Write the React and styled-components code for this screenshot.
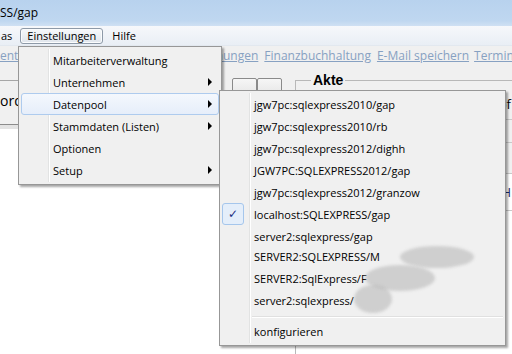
import React from "react";
import styled, { createGlobalStyle } from "styled-components";

const GlobalStyle = createGlobalStyle`
  html, body {
    margin: 0;
    padding: 0;
    background: #fff;
  }
  body {
    font-family: "Open Sans", "Noto Sans", sans-serif;
    font-size: 11px;
    color: #000;
  }
`;

const Window = styled.div`
  position: relative;
  width: 512px;
  height: 354px;
  overflow: hidden;
  display: flex;
  flex-direction: column;
  background: #f0f0f0;
`;

const TitleBar = styled.div`
  height: 26px;
  flex: none;
  display: flex;
  align-items: center;
  padding-bottom: 1px;
  box-sizing: border-box;
  background: linear-gradient(#b8d2ee, #bfd7f0 80%, #cfe0f3);
  font-size: 12px;
`;

const MenuBar = styled.div`
  height: 20px;
  flex: none;
  display: flex;
  align-items: center;
  background: linear-gradient(#f6f8fb, #e9eef5);
  border-bottom: 1px solid #e2e8ef;
  box-sizing: border-box;
`;

const MenuTitle = styled.div`
  height: 16px;
  display: flex;
  align-items: center;
  padding: 0 6px;
  margin-left: ${({ $gap }) => $gap || 0}px;
  box-sizing: border-box;
  border: 1px solid ${({ $open }) => ($open ? "#8e9aa8" : "transparent")};
  border-radius: 3px;
  background: ${({ $open }) =>
    $open ? "linear-gradient(#f7f9fb, #dfe5ec)" : "transparent"};
  box-shadow: ${({ $open }) => ($open ? "inset 0 0 0 1px #fbfcfd" : "none")};
`;

const LinkBar = styled.div`
  height: 19px;
  flex: none;
  display: flex;
  align-items: center;
  white-space: nowrap;
  font-size: 12px;
`;

const Link = styled.span`
  color: #87a1c2;
  text-decoration: underline;
  margin-left: ${({ $gap }) => $gap || 0}px;
`;

const Workspace = styled.div`
  flex: 1;
  display: grid;
  grid-template-columns: 222px 73px 1fr;
`;

const LeftPane = styled.div`
  display: flex;
  flex-direction: column;
  padding-top: 15px;
`;

const SearchBox = styled.div`
  height: 39px;
  border-top: 1px solid #a6a6a6;
  border-bottom: 1px solid #8c8c8c;
  display: flex;
  align-items: center;
  font-size: 14px;
  padding-bottom: 4px;
  box-sizing: content-box;
`;

const Splitter = styled.div`
  height: 4px;
  background: #e3e3e3;
`;

const WhiteArea = styled.div`
  flex: 1;
  background: #fff;
`;

const MidPane = styled.div`
  display: flex;
  align-items: flex-start;
  padding: 13px 0 0 10px;
  background: linear-gradient(#f0f0f0 60px, #fff 60px);
`;

const SmallButton = styled.div`
  width: 25px;
  height: 28px;
  box-sizing: border-box;
  border: 1px solid #8a8a8a;
  border-radius: 2px;
  background: linear-gradient(#f6f6f6, #dcdcdc);
`;

const GroupPane = styled.div`
  display: flex;
  flex-direction: column;
  padding-top: 15px;
`;

const GroupBox = styled.div`
  flex: 1;
  border-top: 1px solid #b8b8b8;
  border-left: 1px solid #b8b8b8;
  display: flex;
  flex-direction: column;
`;

const Legend = styled.div`
  align-self: flex-start;
  margin: -9px 0 0 15px;
  padding: 0 2px;
  background: #f0f0f0;
  font-family: "Liberation Sans", Arial, sans-serif;
  font-weight: bold;
  font-size: 14px;
  line-height: 16px;
`;

const FieldRow = styled.div`
  height: ${({ $h }) => $h}px;
  flex: none;
  display: flex;
  align-items: center;
  justify-content: flex-end;
  border-bottom: 1px solid #c9c9c9;
  background: ${({ $white }) => ($white ? "#fff" : "#f0f0f0")};
  font-size: 13px;
`;

const FieldText = styled.span`
  margin-right: 1px;
  color: ${({ $blue }) => ($blue ? "#1a2a6a" : "#000")};
`;

const FieldFill = styled.div`
  flex: 1;
  background: #fff;
`;

/* ---- drop-down menus (overlay) ---- */

const Popup = styled.div`
  position: absolute;
  left: ${({ $x }) => $x}px;
  top: ${({ $y }) => $y}px;
  width: ${({ $w }) => $w}px;
  box-sizing: border-box;
  padding: 2px 2px 3px;
  background: #f0f0f0;
  border: 1px solid #979797;
  box-shadow: 2px 2px 2px rgba(0, 0, 0, 0.35);
  font-size: 11px;
  z-index: ${({ $z }) => $z || 1};

  &::before {
    content: "";
    position: absolute;
    top: 2px;
    bottom: 2px;
    left: 29px;
    width: 1px;
    background: #e2e3e3;
    box-shadow: 1px 0 0 #ffffff;
  }
`;

const Item = styled.div`
  position: relative;
  height: 22px;
  display: flex;
  align-items: center;
  box-sizing: border-box;
  border: 1px solid ${({ $hot }) => ($hot ? "#aecbee" : "transparent")};
  border-radius: 3px;
  background: ${({ $hot }) =>
    $hot ? "linear-gradient(#f4f8fd, #e6eefa)" : "transparent"};
  white-space: nowrap;
`;

const CheckSlot = styled.div`
  width: 22px;
  height: 22px;
  margin: -1px 0 0 -1px;
  flex: none;
  display: flex;
  align-items: center;
  justify-content: center;
  box-sizing: border-box;
  border: 1px solid ${({ $on }) => ($on ? "#a5c6ec" : "transparent")};
  border-radius: 3px;
  background: ${({ $on }) => ($on ? "#e4eefa" : "transparent")};
  color: #1b2c80;
  font-family: "DejaVu Sans", sans-serif;
  font-size: 12px;
  font-weight: bold;
`;

const Label = styled.span`
  margin-left: 10px;
  flex: 1;
`;

const Arrow = styled.span`
  width: 0;
  height: 0;
  margin-right: 6px;
  border-left: 4px solid #000;
  border-top: 4px solid transparent;
  border-bottom: 4px solid transparent;
`;

const Separator = styled.div`
  height: 7px;
  display: flex;
  align-items: center;
  margin-left: 30px;

  &::after {
    content: "";
    flex: 1;
    height: 1px;
    background: #e0e0e0;
    box-shadow: 0 1px 0 #ffffff;
  }
`;

const Smudge = styled.span`
  display: inline-block;
  vertical-align: middle;
  width: ${({ $w }) => $w}px;
  height: ${({ $h }) => $h}px;
  margin: ${({ $m }) => $m};
  border-radius: 50%;
  background: rgba(180, 180, 180, 0.55);
  filter: blur(1.5px);
`;

const mainItems = [
  { label: "Mitarbeiterverwaltung" },
  { label: "Unternehmen", sub: true },
  { label: "Datenpool", sub: true, hot: true },
  { label: "Stammdaten (Listen)", sub: true },
  { label: "Optionen" },
  { label: "Setup", sub: true },
];

const pools = [
  { label: "jgw7pc:sqlexpress2010/gap" },
  { label: "jgw7pc:sqlexpress2010/rb" },
  { label: "jgw7pc:sqlexpress2012/dighh" },
  { label: "JGW7PC:SQLEXPRESS2012/gap" },
  { label: "jgw7pc:sqlexpress2012/granzow" },
  { label: "localhost:SQLEXPRESS/gap", checked: true },
  { label: "server2:sqlexpress/gap" },
  { label: "SERVER2:SQLEXPRESS/M", smudge: { w: 74, h: 22, m: "-2px 0 0 20px" } },
  { label: "SERVER2:SqlExpress/F", smudge: { w: 70, h: 26, m: "-4px 0 0 -2px" } },
  { label: "server2:sqlexpress/", smudge: { w: 38, h: 28, m: "-6px 0 0 0" } },
];

export default function App() {
  return (
    <>
      <GlobalStyle />
      <Window>
        <TitleBar>SS/gap</TitleBar>
        <MenuBar>
          <MenuTitle $gap={-6}>as</MenuTitle>
          <MenuTitle $open $gap={1}>Einstellungen</MenuTitle>
          <MenuTitle $gap={2}>Hilfe</MenuTitle>
        </MenuBar>
        <LinkBar>
          <Link>ent</Link>
          <Link $gap={170}>Rechnungen</Link>
          <Link $gap={6}>Finanzbuchhaltung</Link>
          <Link $gap={6}>E-Mail speichern</Link>
          <Link $gap={5}>Termin</Link>
        </LinkBar>
        <Workspace>
          <LeftPane>
            <SearchBox>ord</SearchBox>
            <Splitter />
            <WhiteArea />
          </LeftPane>
          <MidPane>
            <SmallButton />
            <SmallButton />
          </MidPane>
          <GroupPane>
            <GroupBox>
              <Legend>Akte</Legend>
              <FieldRow $h={31}>
                <FieldText>of</FieldText>
              </FieldRow>
              <FieldRow $h={22} />
              <FieldRow $h={30} />
              <FieldRow $h={36} $white>
                <FieldText $blue>H</FieldText>
              </FieldRow>
              <FieldFill />
            </GroupBox>
          </GroupPane>
        </Workspace>

        <Popup $x={18} $y={46} $w={204}>
          {mainItems.map((it) => (
            <Item key={it.label} $hot={it.hot}>
              <CheckSlot />
              <Label>{it.label}</Label>
              {it.sub && <Arrow />}
            </Item>
          ))}
        </Popup>

        <Popup $x={219} $y={90} $w={287} $z={2}>
          {pools.map((it) => (
            <Item key={it.label}>
              <CheckSlot $on={it.checked}>{it.checked ? "✓" : ""}</CheckSlot>
              <Label>
                {it.label}
                {it.smudge && (
                  <Smudge $w={it.smudge.w} $h={it.smudge.h} $m={it.smudge.m} />
                )}
              </Label>
            </Item>
          ))}
          <Separator />
          <Item>
            <CheckSlot />
            <Label>konfigurieren</Label>
          </Item>
        </Popup>
      </Window>
    </>
  );
}
